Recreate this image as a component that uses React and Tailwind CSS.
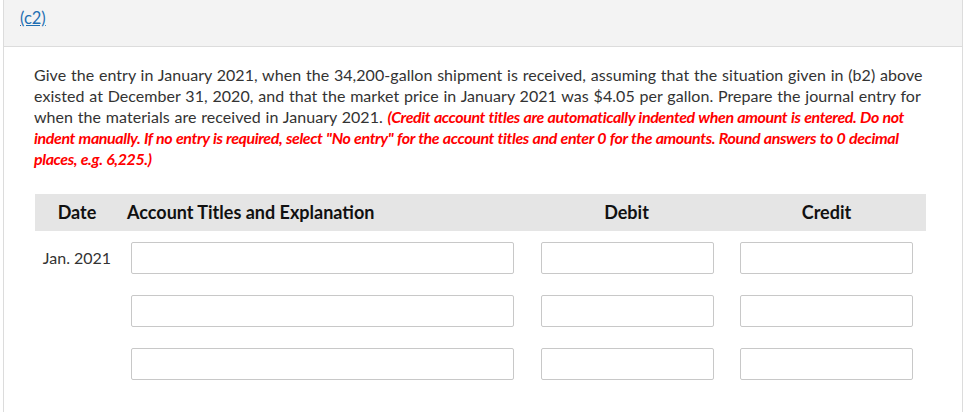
export default function App() {
    const rows = [0, 1, 2];

    return (
        <div className="min-h-[412px] bg-white" style={{ fontFamily: 'Lato, "Open Sans", sans-serif' }}>
            <div className="ml-[3px] mr-[5px] min-h-[412px] border-x border-[#dcdcdc]">
                {/* section header */}
                <div className="h-[47px] border-b border-[#dcdcdc] bg-[#f3f3f3] pl-[15px] pt-[6px]">
                    <a
                        href="#"
                        className="inline-block px-[1px] text-[16.5px] leading-[22px] text-[#1f6fb2] underline"
                    >
                        (c2)
                    </a>
                </div>

                <div className="pl-[30px] pr-[10px] pt-[17px]">
                    <p className="whitespace-nowrap text-[16px] leading-[21px] tracking-[0.05px] [word-spacing:0.6px] text-[#333]">
                        Give the entry in January 2021, when the 34,200-gallon shipment is received, assuming that the situation given in (b2) above
                        <br />
                        existed at December 31, 2020, and that the market price in January 2021 was $4.05 per gallon. Prepare the journal entry for
                        <br />
                        when the materials are received in January 2021.{' '}
                        <span className="font-bold italic tracking-[-0.4px] [word-spacing:0.5px] text-[#ff0000]">
                            (Credit account titles are automatically indented when amount is entered. Do not
                            <br />
                            indent manually. If no entry is required, select "No entry" for the account titles and enter 0 for the amounts. Round answers to 0 decimal
                            <br />
                            places, e.g. 6,225.)
                        </span>
                    </p>

                    {/* journal table */}
                    <div className="mt-[25px] ml-[1px] w-[891px]">
                        <div className="grid h-[37px] grid-cols-[84px_407px_201px_199px] items-center bg-[#e5e5e5] text-[18px] font-bold text-[#111]">
                            <div className="text-center">Date</div>
                            <div className="pl-[8px]">Account Titles and Explanation</div>
                            <div className="text-center">Debit</div>
                            <div className="text-center">Credit</div>
                        </div>

                        {rows.map((r) => (
                            <div
                                key={r}
                                className="grid grid-cols-[84px_407px_201px_199px] items-center pt-[11px] pb-[10px]"
                            >
                                <div className="text-center text-[16px] text-[#333]">
                                    {r === 0 ? 'Jan. 2021' : ''}
                                </div>
                                <div className="pl-[12px] pr-[12px]">
                                    <input className="block h-[32px] w-[383px] rounded-[2px] border border-[#c8c8c8] bg-white" />
                                </div>
                                <div className="pl-[15px]">
                                    <input className="block h-[32px] w-[173px] rounded-[2px] border border-[#c8c8c8] bg-white" />
                                </div>
                                <div className="pl-[13px]">
                                    <input className="block h-[32px] w-[173px] rounded-[2px] border border-[#c8c8c8] bg-white" />
                                </div>
                            </div>
                        ))}
                    </div>
                </div>
            </div>
        </div>
    );
}
